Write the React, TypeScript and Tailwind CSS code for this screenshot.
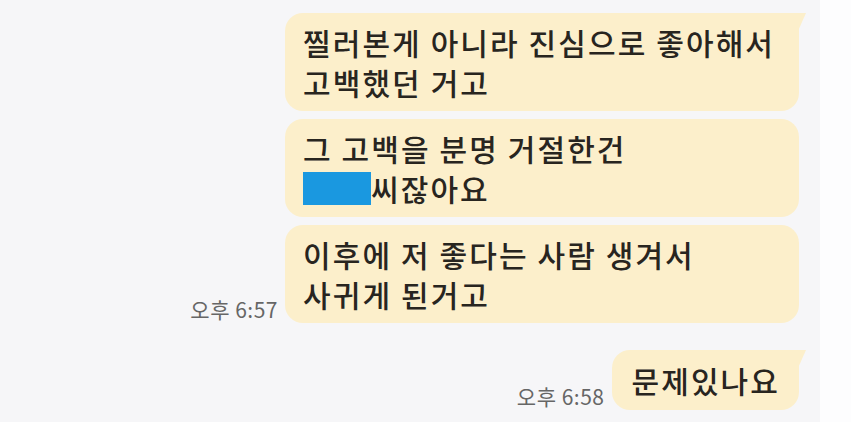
import React from 'react';

const font = { fontFamily: '"Noto Sans CJK KR", "Noto Sans", sans-serif' };

interface BubbleProps {
  children: React.ReactNode;
  time?: string;
  tail?: boolean;
  wide?: boolean;
}

const Tail = () => (
  <svg className="absolute top-0 -right-[7px] w-[10px] h-[18px]" viewBox="0 0 10 18">
    <path d="M0 0 L10 0 L2 18 L0 18 Z" fill="#fcefcb" />
  </svg>
);

const Bubble: React.FC<BubbleProps> = ({ children, time, tail = false, wide = true }) => (
  <div className="flex items-end justify-end gap-[7px]">
    {time && (
      <span className="text-[21px] leading-[26px] tracking-[0.5px] text-[#666666] mb-[1px]">{time}</span>
    )}
    <div
      className={`relative bg-[#fcefcb] rounded-[18px] ${tail ? 'rounded-tr-none' : ''} ${
        wide ? 'w-[514px] pl-[18px] pr-[10px] py-[9px]' : 'pl-[20px] pr-[19px] py-[10px]'
      } text-[30px] leading-[40px] tracking-[2.1px] font-medium text-[#28251f]`}
    >
      {tail && <Tail />}
      {children}
    </div>
  </div>
);

export default function App() {
  return (
    <div className="w-[851px] h-[422px] flex bg-[#fdfdfe] overflow-hidden" style={font}>
      <div className="w-[820px] h-full bg-[#f6f6f8] pt-[13px] pr-[21px] flex flex-col items-end">
        <div className="flex flex-col gap-[8px]">
          <Bubble tail>
            <div>찔러본게 아니라 진심으로 좋아해서</div>
            <div>고백했던 거고</div>
          </Bubble>
          <Bubble>
            <div>그 고백을 분명 거절한건</div>
            <div className="flex items-center">
              <span className="inline-block w-[68px] h-[33px] bg-[#1a98e0]" />
              <span>씨잖아요</span>
            </div>
          </Bubble>
          <Bubble time="오후 6:57">
            <div>이후에 저 좋다는 사람 생겨서</div>
            <div>사귀게 된거고</div>
          </Bubble>
        </div>
        <div className="mt-[27px]">
          <Bubble time="오후 6:58" tail wide={false}>
            <div>문제있나요</div>
          </Bubble>
        </div>
      </div>
    </div>
  );
}
